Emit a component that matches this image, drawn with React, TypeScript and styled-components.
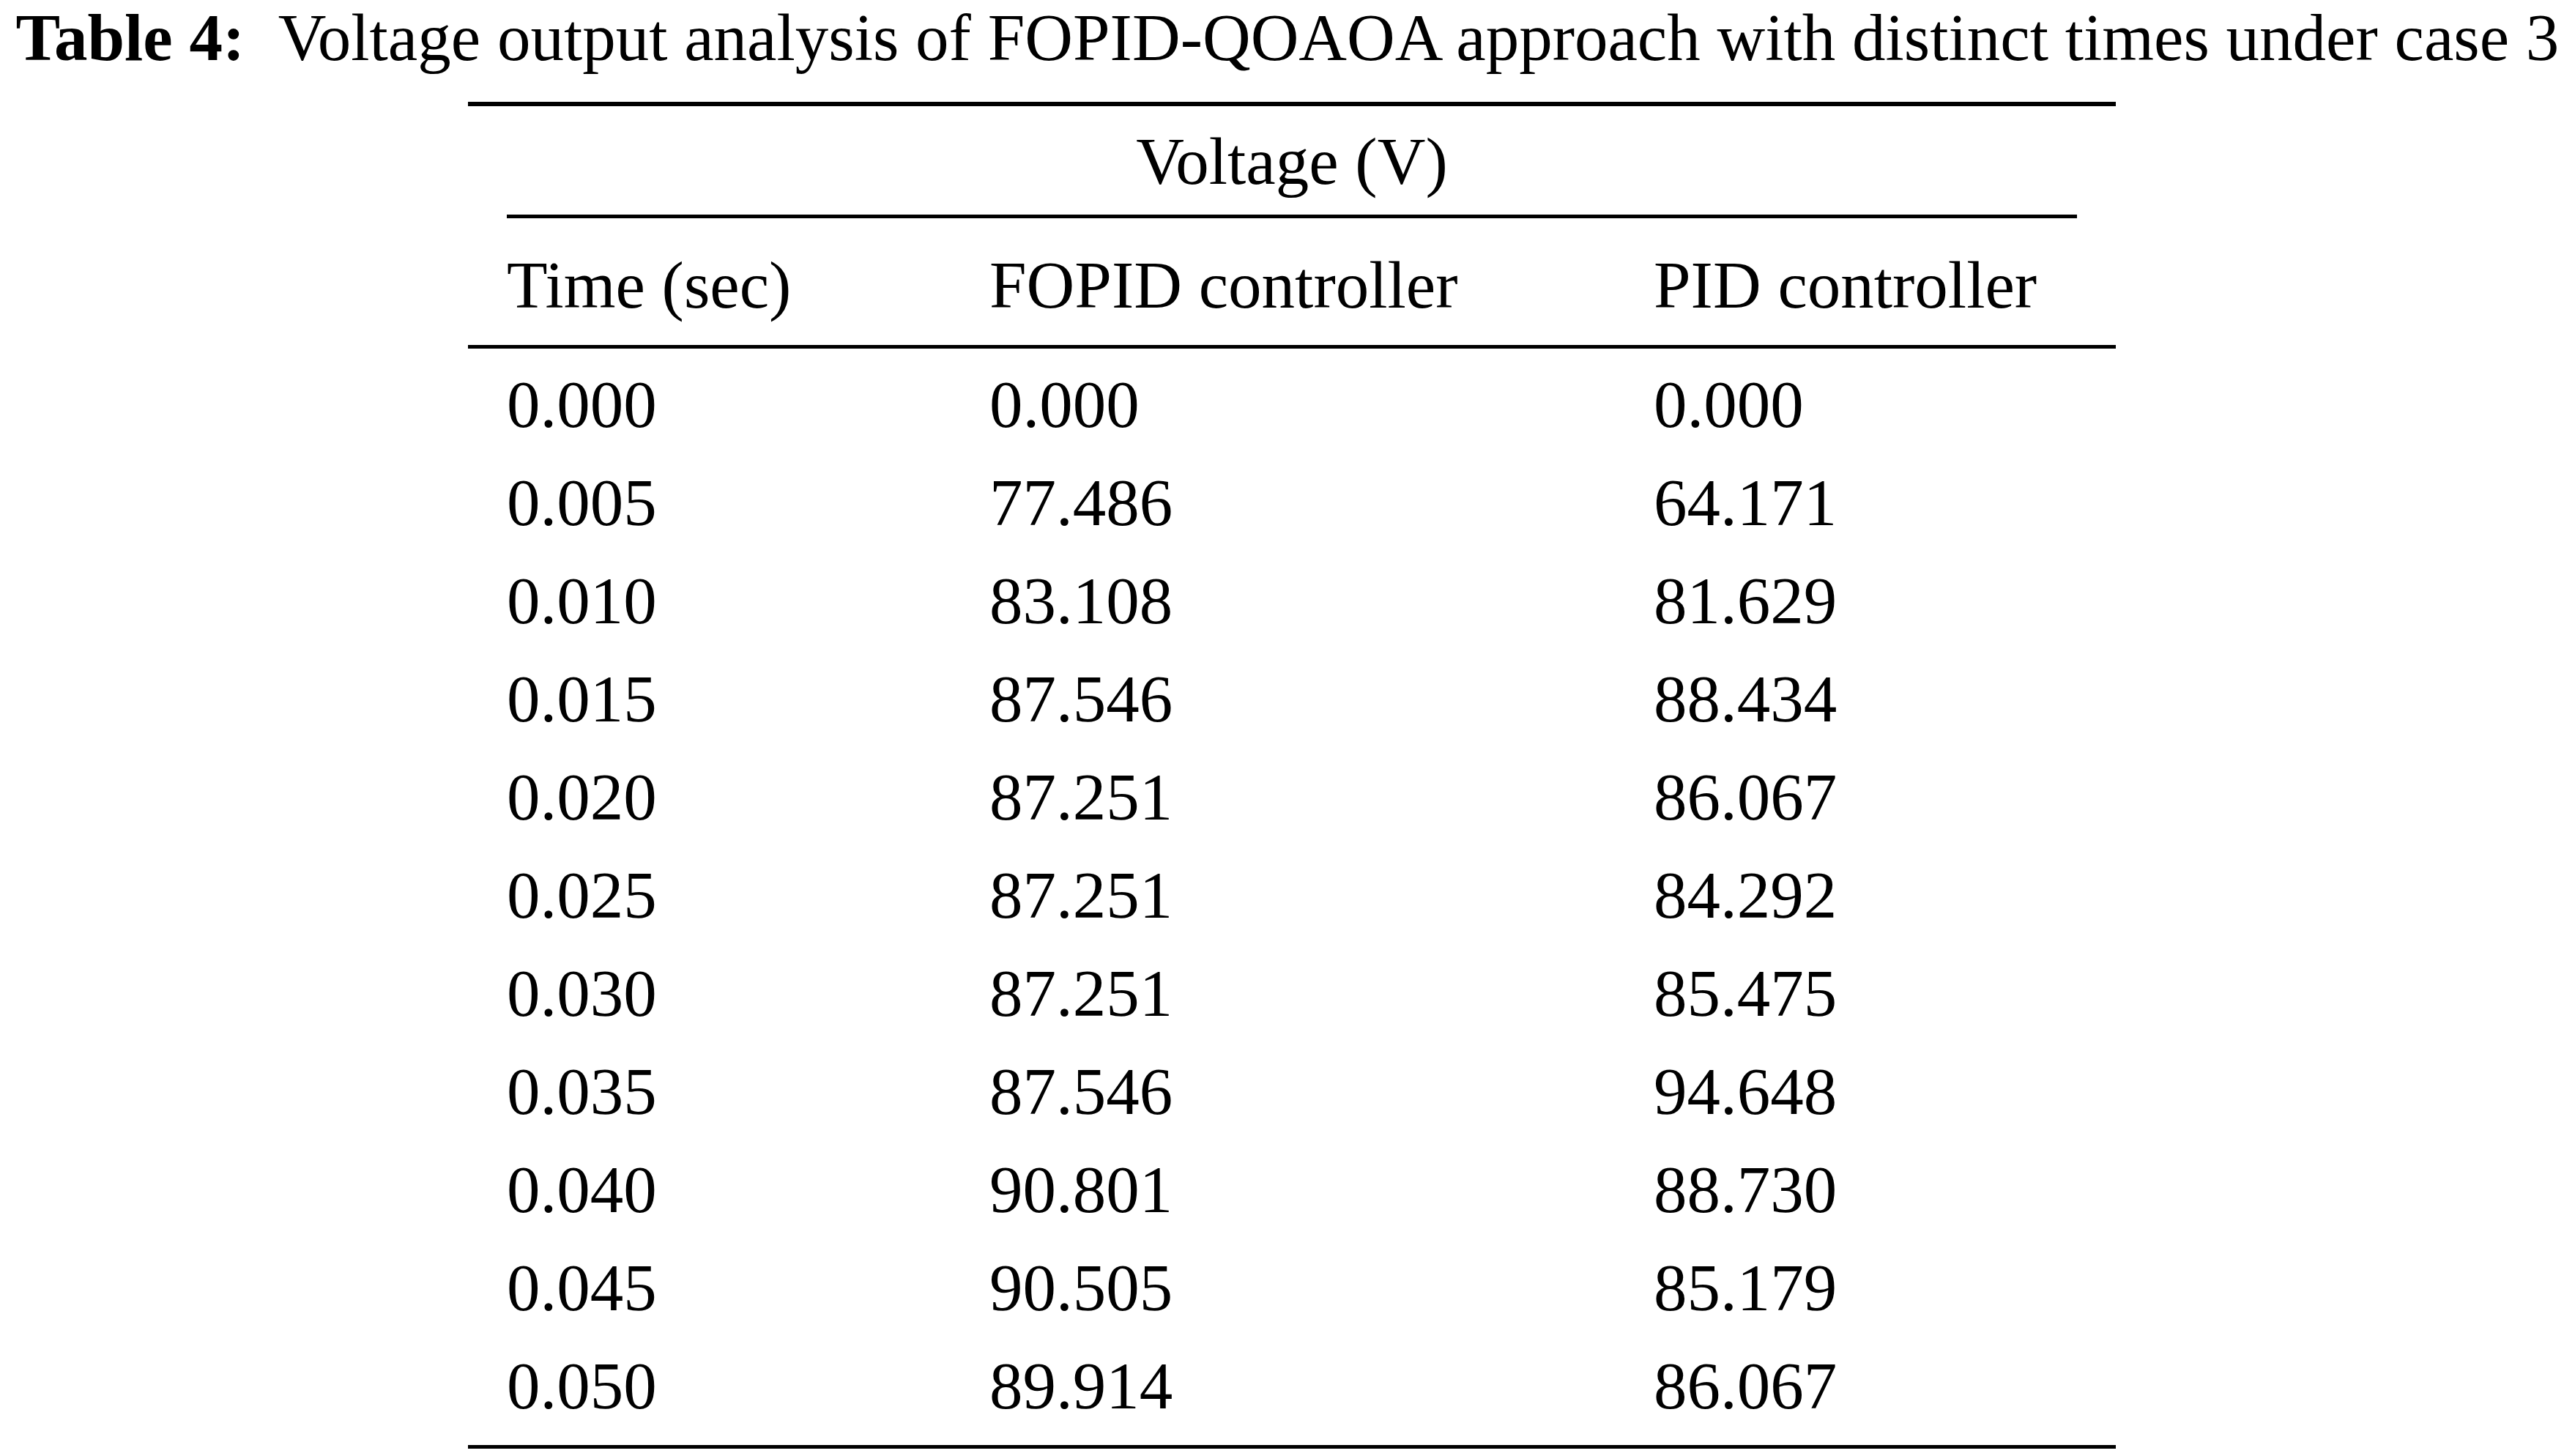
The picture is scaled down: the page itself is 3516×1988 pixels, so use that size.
import { FunctionComponent } from "react";
import styled, { createGlobalStyle } from "styled-components";

const rows: [string, string, string][] = [
  ["0.000", "0.000", "0.000"],
  ["0.005", "77.486", "64.171"],
  ["0.010", "83.108", "81.629"],
  ["0.015", "87.546", "88.434"],
  ["0.020", "87.251", "86.067"],
  ["0.025", "87.251", "84.292"],
  ["0.030", "87.251", "85.475"],
  ["0.035", "87.546", "94.648"],
  ["0.040", "90.801", "88.730"],
  ["0.045", "90.505", "85.179"],
  ["0.050", "89.914", "86.067"],
];

const GlobalStyle = createGlobalStyle`
  html, body {
    margin: 0;
    padding: 0;
    background: #fff;
  }
  body {
    font-family: "Liberation Serif", "Times New Roman", serif;
    color: #000;
  }
`;

const Page = styled.div`
  display: flex;
  flex-direction: column;
  align-items: center;
  width: 3516px;
  min-height: 1988px;
  font-size: 91px;
`;

const Caption = styled.div`
  white-space: nowrap;
  line-height: 104px;
  margin-bottom: 35px;

  b {
    font-weight: 700;
    margin-right: 0.5em;
  }
`;

const Table = styled.div`
  width: 2250px;
  margin-left: 12px;
  border-top: 6px solid #000;
  border-bottom: 5px solid #000;
`;

const SpanRow = styled.div`
  text-align: center;
  line-height: 134px;
  padding: 9px 0 5px;
`;

const Rule = styled.div<{ $inset?: number }>`
  height: 5px;
  background: #000;
  margin: 0 ${(p) => p.$inset ?? 0}px;
`;

const Row = styled.div<{ $head?: boolean }>`
  display: grid;
  grid-template-columns: 659px 907px 1fr;
  padding: 0 53px;
  line-height: 134px;
  ${(p) => p.$head && "padding-top: 25px; padding-bottom: 14px;"}
`;

const Body = styled.div`
  padding: 10px 0 13px;
`;

const Cell = styled.div`
  white-space: nowrap;
`;

const App: FunctionComponent = () => {
  return (
    <>
      <GlobalStyle />
      <Page>
        <Caption>
          <b>Table 4:</b>Voltage output analysis of FOPID-QOAOA approach with distinct times under case 3
        </Caption>
        <Table>
          <SpanRow>Voltage (V)</SpanRow>
          <Rule $inset={53} />
          <Row $head>
            <Cell>Time (sec)</Cell>
            <Cell>FOPID controller</Cell>
            <Cell>PID controller</Cell>
          </Row>
          <Rule />
          <Body>
            {rows.map((r) => (
              <Row key={r[0]}>
                <Cell>{r[0]}</Cell>
                <Cell>{r[1]}</Cell>
                <Cell>{r[2]}</Cell>
              </Row>
            ))}
          </Body>
        </Table>
      </Page>
    </>
  );
};

export default App;
